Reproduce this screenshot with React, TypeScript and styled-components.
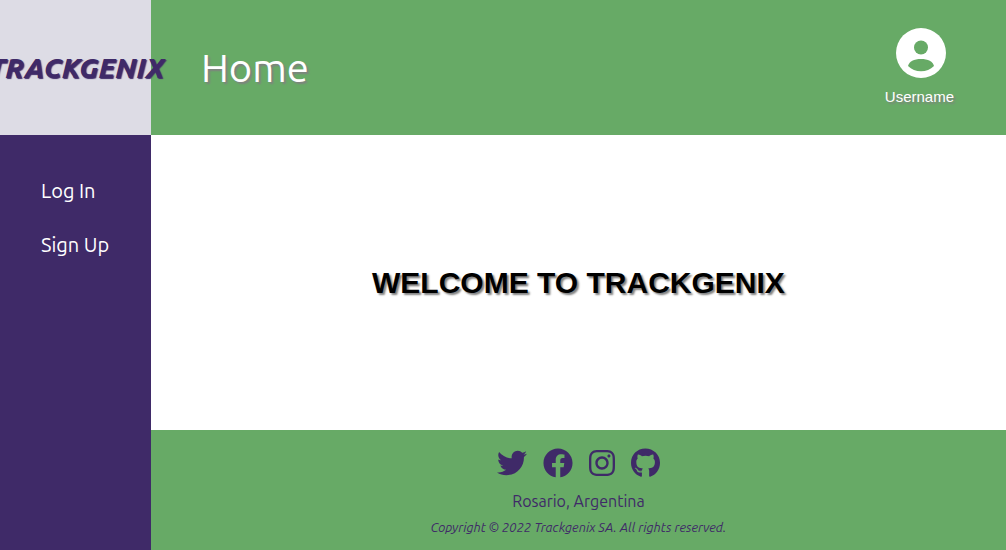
import React from 'react';
import styled, { createGlobalStyle } from 'styled-components';
import { FaTwitter, FaFacebook, FaInstagram, FaGithub } from 'react-icons/fa';

const purple = '#3f2a68';
const green = '#67aa66';
const brandFont = 'Ubuntu, "Noto Sans", sans-serif';

const GlobalStyle = createGlobalStyle`
  *, *::before, *::after { box-sizing: border-box; }
  body {
    margin: 0;
    font-family: "Liberation Sans", Arial, sans-serif;
  }
`;

const Page = styled.div`
  display: grid;
  grid-template-columns: 15% 1fr;
  min-height: 100vh;
`;

const Sidebar = styled.aside`
  display: flex;
  flex-direction: column;
  min-width: 0;
  background: ${purple};
`;

const Brand = styled.div`
  position: relative;
  z-index: 1;
  display: flex;
  align-items: center;
  justify-content: center;
  height: 135px;
  padding-left: 2px;
  background: #dddce5;
  color: ${purple};
  font: italic 800 28px/36px ${brandFont};
  text-shadow: 1px 1px 1px ${purple};
  white-space: nowrap;
`;

const Menu = styled.ul`
  display: flex;
  flex-direction: column;
  gap: 30px;
  margin: 0;
  padding: 44px 0 0 41px;
  list-style: none;
`;

const MenuLink = styled.a`
  display: block;
  color: #fff;
  font: 400 20px/24px ${brandFont};
  text-decoration: none;
  white-space: nowrap;
`;

const Content = styled.div`
  display: flex;
  flex-direction: column;
  min-width: 0;
`;

const Header = styled.header`
  display: flex;
  align-items: center;
  justify-content: space-between;
  height: 135px;
  padding: 0 52px 0 50px;
  background: ${green};
  color: #fff;
`;

const Title = styled.h1`
  margin: 0;
  font: 400 40px/48px ${brandFont};
  text-shadow: 2px 2px 2px #808080;
`;

const User = styled.div`
  display: flex;
  flex-direction: column;
  align-items: flex-end;
  gap: 10px;
  padding-bottom: 2px;
  font-size: 15px;
  line-height: 18px;
  text-shadow: 2px 2px 2px #808080;
`;

const AvatarIcon = styled.svg`
  width: 50px;
  height: 50px;
  margin-right: 8px;
`;

const Main = styled.main`
  display: flex;
  flex: 1;
  align-items: center;
  justify-content: center;
`;

const Welcome = styled.h2`
  margin: 0;
  font-size: 30px;
  line-height: 36px;
  text-shadow: 2px 2px 2px #808080;
`;

const Footer = styled.footer`
  display: flex;
  flex-direction: column;
  align-items: center;
  height: 120px;
  padding-top: 18px;
  background: ${green};
  color: ${purple};
  font-family: ${brandFont};
`;

const Socials = styled.div`
  display: flex;
  gap: 16px;
`;

const SocialLink = styled.a<{ $width: number }>`
  display: flex;
  color: inherit;
  svg {
    width: ${({ $width }) => $width}px;
    height: 30px;
  }
`;

const Place = styled.p`
  margin: 12px 0 0;
  font-size: 16px;
  line-height: 22px;
`;

const Copyright = styled.p`
  margin: 6px 0 0;
  font-size: 13px;
  line-height: 18px;
  font-style: italic;
`;

const Avatar = () => (
  <AvatarIcon viewBox="0 0 50 50" aria-hidden="true">
    <circle cx="25" cy="25" r="25" fill="#fff" />
    <circle cx="25" cy="19.500" r="7" fill={green} />
    <path d="M12 38C13 33.500 18 31 25 31S37 33.500 38 38C34.500 41.500 30 43.300 25 43.300S15.500 41.500 12 38Z" fill={green} />
  </AvatarIcon>
);

const socials = [
  { name: 'Twitter', Icon: FaTwitter, width: 30 },
  { name: 'Facebook', Icon: FaFacebook, width: 30 },
  { name: 'Instagram', Icon: FaInstagram, width: 26 },
  { name: 'GitHub', Icon: FaGithub, width: 29 },
];

export default function App() {
  return (
    <>
      <GlobalStyle />
      <Page>
        <Sidebar>
          <Brand>TRACKGENIX</Brand>
          <nav>
            <Menu>
              <li><MenuLink href="#login">Log In</MenuLink></li>
              <li><MenuLink href="#signup">Sign Up</MenuLink></li>
            </Menu>
          </nav>
        </Sidebar>
        <Content>
          <Header>
            <Title>Home</Title>
            <User>
              <Avatar />
              <span>Username</span>
            </User>
          </Header>
          <Main>
            <Welcome>WELCOME TO TRACKGENIX</Welcome>
          </Main>
          <Footer>
            <Socials>
              {socials.map(({ name, Icon, width }) => (
                <SocialLink key={name} $width={width} href={`#${name.toLowerCase()}`} aria-label={name}>
                  <Icon />
                </SocialLink>
              ))}
            </Socials>
            <Place>Rosario, Argentina</Place>
            <Copyright>Copyright © 2022 Trackgenix SA. All rights reserved.</Copyright>
          </Footer>
        </Content>
      </Page>
    </>
  );
}
